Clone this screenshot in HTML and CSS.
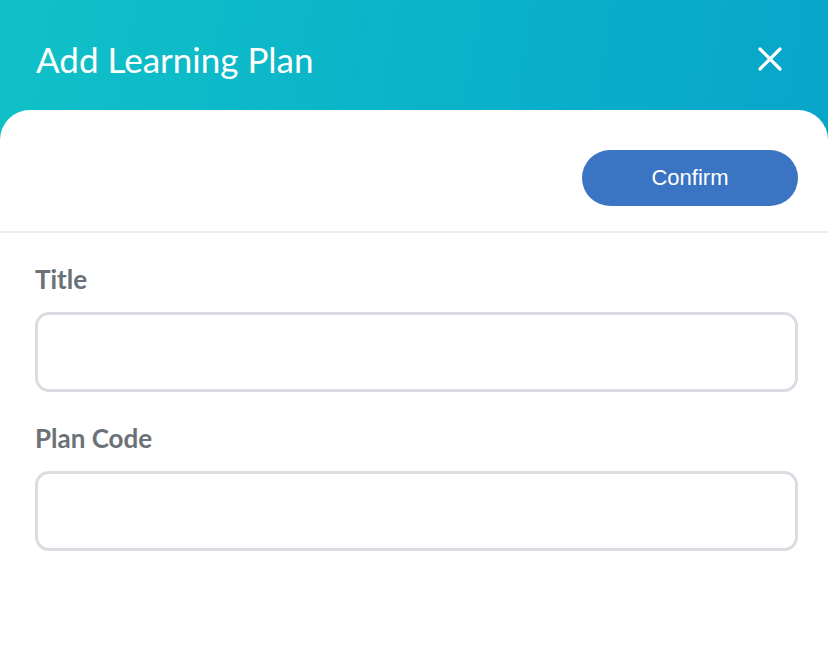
FILE: index.html
```html
<!DOCTYPE html>
<html lang="en">
<head>
<meta charset="utf-8">
<title>Add Learning Plan</title>
<link rel="stylesheet" href="styles.css">
</head>
<body>
<div class="modal">
  <header class="modal-header">
    <h1 class="modal-title">Add Learning Plan</h1>
    <button class="close-btn" aria-label="Close">
      <svg width="24" height="24" viewBox="0 0 24 24"><path d="M2 2 L22 22 M22 2 L2 22" stroke="#fff" stroke-width="3.2" stroke-linecap="round" fill="none"/></svg>
    </button>
  </header>
  <section class="modal-card">
    <div class="toolbar">
      <button class="confirm-btn">Confirm</button>
    </div>
    <form class="form">
      <label class="field-label" for="title">Title</label>
      <input class="field-input" id="title" type="text">
      <label class="field-label second" for="code">Plan Code</label>
      <input class="field-input" id="code" type="text">
    </form>
  </section>
</div>
</body>
</html>
```

FILE: styles.css
```css
* { box-sizing: border-box; }
html, body { margin: 0; padding: 0; background: #ffffff; }
body { font-family: Lato, "Noto Sans", sans-serif; }

.modal {
  min-height: 100vh;
  display: flex;
  flex-direction: column;
  background: linear-gradient(100deg, #10c1c7 0%, #0ab2ca 50%, #07a2cb 100%);
}

.modal-header {
  height: 110px;
  display: flex;
  align-items: center;
  justify-content: space-between;
  padding: 7px 46px 0 36px;
  flex: none;
}

.modal-title {
  margin: 0;
  color: #ffffff;
  font-family: Lato, sans-serif;
  font-weight: 400;
  font-size: 35px;
  line-height: 40px;
}

.close-btn {
  background: none;
  border: 0;
  padding: 0;
  width: 24px;
  height: 24px;
  display: flex;
  cursor: pointer;
}

.modal-card {
  flex: 1;
  background: #ffffff;
  border-radius: 30px 30px 0 0;
}

.toolbar {
  display: flex;
  justify-content: flex-end;
  padding: 40px 30px 25px;
  border-bottom: 2px solid #eeeeee;
}

.confirm-btn {
  width: 216px;
  height: 56px;
  border: 0;
  border-radius: 28px;
  background: #3a74c3;
  color: #ffffff;
  font-family: "Liberation Sans", Arial, sans-serif;
  font-size: 22px;
  cursor: pointer;
}

.form {
  display: flex;
  flex-direction: column;
  padding: 31px 30px 0 35px;
}

.field-label {
  display: block;
  color: #6b7177;
  font-family: Lato, sans-serif;
  font-weight: 700;
  font-size: 26px;
  line-height: 30px;
  margin-bottom: 18px;
}

.field-label.second { margin-top: 31px; }

.field-input {
  display: block;
  width: 100%;
  height: 80px;
  border: 3px solid #d9dde1;
  border-radius: 14px;
  background: #ffffff;
  outline: none;
}
```
